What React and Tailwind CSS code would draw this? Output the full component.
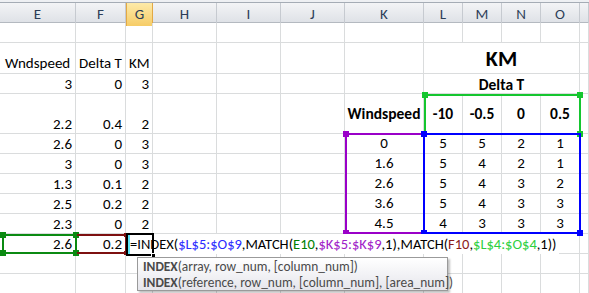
import React from "react";

const font = { fontFamily: "Calibri, Carlito, Lato, 'Liberation Sans', sans-serif" };

const letters = ["E", "F", "G", "H", "I", "J", "K", "L", "M", "N", "O", ""];
const gridCols = "grid grid-cols-[76px_50px_27px_64px_64px_64px_79px_39px_39px_39px_39px_1fr]";

// each row: height + cells as [colIndex, text, kind]
// kind: r = right/bottom, l = left/bottom, c = centered, b = bold centered
const rows = [
  { h: "h-[20px]", cells: [] },
  { h: "h-[31px]", cells: [[0, "Wndspeed", "l"], [1, "Delta T", "l"], [2, "KM", "l"]], merged: "KM", big: true },
  { h: "h-[20px]", cells: [[0, "3", "r"], [1, "0", "r"], [2, "3", "r"]], merged: "Delta T" },
  {
    h: "h-[40px]",
    cells: [[0, "2.2", "r"], [1, "0.4", "r"], [2, "2", "r"], [6, "Windspeed", "b"], [7, "-10", "b"], [8, "-0.5", "b"], [9, "0", "b"], [10, "0.5", "b"]],
  },
  { h: "h-[20px]", cells: [[0, "2.6", "r"], [1, "0", "r"], [2, "3", "r"], [6, "0", "c"], [7, "5", "c"], [8, "5", "c"], [9, "2", "c"], [10, "1", "c"]] },
  { h: "h-[20px]", cells: [[0, "3", "r"], [1, "0", "r"], [2, "3", "r"], [6, "1.6", "c"], [7, "5", "c"], [8, "4", "c"], [9, "2", "c"], [10, "1", "c"]] },
  { h: "h-[20px]", cells: [[0, "1.3", "r"], [1, "0.1", "r"], [2, "2", "r"], [6, "2.6", "c"], [7, "5", "c"], [8, "4", "c"], [9, "3", "c"], [10, "2", "c"]] },
  { h: "h-[20px]", cells: [[0, "2.5", "r"], [1, "0.2", "r"], [2, "2", "r"], [6, "3.6", "c"], [7, "5", "c"], [8, "4", "c"], [9, "3", "c"], [10, "3", "c"]] },
  { h: "h-[20px]", cells: [[0, "2.3", "r"], [1, "0", "r"], [2, "2", "r"], [6, "4.5", "c"], [7, "4", "c"], [8, "3", "c"], [9, "3", "c"], [10, "3", "c"]] },
  { h: "h-[20px]", cells: [[0, "2.6", "r"], [1, "0.2", "r"]] },
  { h: "h-[20px]", cells: [] },
  { h: "h-[20px]", cells: [] },
];

const kindClass = {
  r: "justify-end items-end pb-[1px] text-[15px]",
  l: "justify-start items-end pb-[2px] text-[15px]",
  c: "justify-center items-center text-[15px]",
  b: "justify-center items-center font-bold text-[15.5px]",
};

function Cell({ text, kind, first }) {
  return (
    <div
      className={`flex border-r border-b border-[#dadcdd] leading-none whitespace-nowrap ${first ? "pl-[5px] pr-[3px]" : "px-[3px]"} ${
        kind ? kindClass[kind] : ""
      }`}
    >
      {text}
    </div>
  );
}

// little square grips on the corners of a referenced range
function Grips({ color, corners }) {
  const pos = {
    tl: "-left-[4px] -top-[4px]",
    tr: "-right-[4px] -top-[4px]",
    bl: "-left-[4px] -bottom-[4px]",
    br: "-right-[4px] -bottom-[4px]",
  };
  return corners.map((c) => <div key={c} className={`absolute w-[6px] h-[6px] ${pos[c]} ${color}`} />);
}

export default function App() {
  return (
    <div className="relative w-[589px] h-[293px] overflow-hidden bg-white text-black" style={font}>
      <div className="h-[3px] bg-[#eef0f3] border-b border-[#a5acb5]" />
      <div className={`${gridCols} h-[20px] border-b border-[#b4b9c0] bg-gradient-to-b from-[#f3f4f6] to-[#dfe2e7] text-[#2c3d57] text-[15px]`}>
        {letters.map((l, i) => (
          <div
            key={i}
            className={`flex items-center justify-center border-r ${
              l === "G" ? "bg-gradient-to-b from-[#fdeaa8] to-[#f6cc66] border-[#e2a945] border-l" : "border-[#c6cad0]"
            }`}
          >
            {l}
          </div>
        ))}
      </div>

      {rows.map((row, ri) => {
        const byCol = {};
        row.cells.forEach(([c, t, k]) => (byCol[c] = [t, k]));
        return (
          <div key={ri} className={`${gridCols} ${row.h}`}>
            {letters.map((_, ci) => {
              if (row.merged && ci > 7 && ci < 11) return null;
              if (row.merged && ci === 7) {
                return (
                  <div
                    key={ci}
                    className={`col-span-4 flex justify-center font-bold border-r border-b border-[#dadcdd] leading-none ${
                      row.big ? "items-start text-[22px] pt-[5px]" : "items-end pb-[1px] text-[15.5px]"
                    }`}
                  >
                    {row.merged}
                  </div>
                );
              }
              const c = byCol[ci];
              return <Cell key={ci} first={ci === 0} text={c ? c[0] : ""} kind={c ? c[1] : null} />;
            })}
          </div>
        );
      })}

      {/* L4:O4 */}
      <div className="absolute left-[424px] top-[94px] w-[157px] h-[41px] border-2 border-[#15c62f]">
        <Grips color="bg-[#15c62f]" corners={["tl", "tr", "br"]} />
      </div>
      {/* K5:K9 */}
      <div className="absolute left-[345px] top-[133px] w-[80px] h-[101px] border-2 border-[#9a00c8]">
        <Grips color="bg-[#9a00c8]" corners={["tl", "bl"]} />
      </div>
      {/* L5:O9 */}
      <div className="absolute left-[423px] top-[133px] w-[158px] h-[101px] border-2 border-[#0000ff]">
        <Grips color="bg-[#0000ff]" corners={["tl", "bl", "br"]} />
      </div>

      {/* formula being typed in G10 */}
      <div className="absolute left-[127px] top-[234px] h-[20px] pl-[3px] pr-[2px] bg-white flex items-center text-[14.5px] whitespace-nowrap leading-none">
        <span>=INDEX(</span>
        <span className="text-[#2a2aff]">$L$5:$O$9</span>
        <span>,MATCH(</span>
        <span className="text-[#008000]">E10</span>
        <span>,</span>
        <span className="text-[#a020c8]">$K$5:$K$9</span>
        <span>,1),MATCH(</span>
        <span className="text-[#8b1a1a]">F10</span>
        <span>,</span>
        <span className="text-[#2ccf3e]">$L$4:$O$4</span>
        <span>,1))</span>
      </div>

      {/* E10 */}
      <div className="absolute left-[2px] top-[234px] w-[75px] h-[20px] border-2 border-[#0b8a12]">
        <Grips color="bg-[#0b8a12]" corners={["tl", "tr", "bl", "br"]} />
      </div>
      {/* F10 */}
      <div className="absolute left-[77px] top-[234px] w-[50px] h-[20px] border-2 border-l-0 border-[#7d1010]">
        <div className="absolute -right-[3px] -top-[3px] w-[4px] h-[4px] bg-[#7d1010]" />
        <div className="absolute -right-[3px] -bottom-[3px] w-[4px] h-[4px] bg-[#7d1010]" />
      </div>
      {/* active cell G10 */}
      <div className="absolute left-[126px] top-[233px] w-[28px] h-[23px] border-2 border-black">
        <div className="absolute left-0 top-0 bottom-0 w-[2px] bg-[#5fe3f5]" />
        <div className="absolute -right-[4px] -bottom-[4px] w-[5px] h-[5px] bg-black border border-white" />
      </div>

      {/* function tooltip */}
      <div className="absolute left-[137px] top-[257px] w-[311px] h-[34px] border border-[#9a9a9a] bg-gradient-to-b from-white to-[#e6e6ec] shadow-[2px_2px_2px_rgba(0,0,0,0.25)] pl-[5px] pt-[1px] text-[13.4px] leading-[16px] text-[#4a4a4a] whitespace-nowrap">
        <div>
          <span className="font-bold">INDEX</span>(array, row_num, [column_num])
        </div>
        <div>
          <span className="font-bold">INDEX</span>(reference, row_num, [column_num], [area_num])
        </div>
      </div>
    </div>
  );
}
